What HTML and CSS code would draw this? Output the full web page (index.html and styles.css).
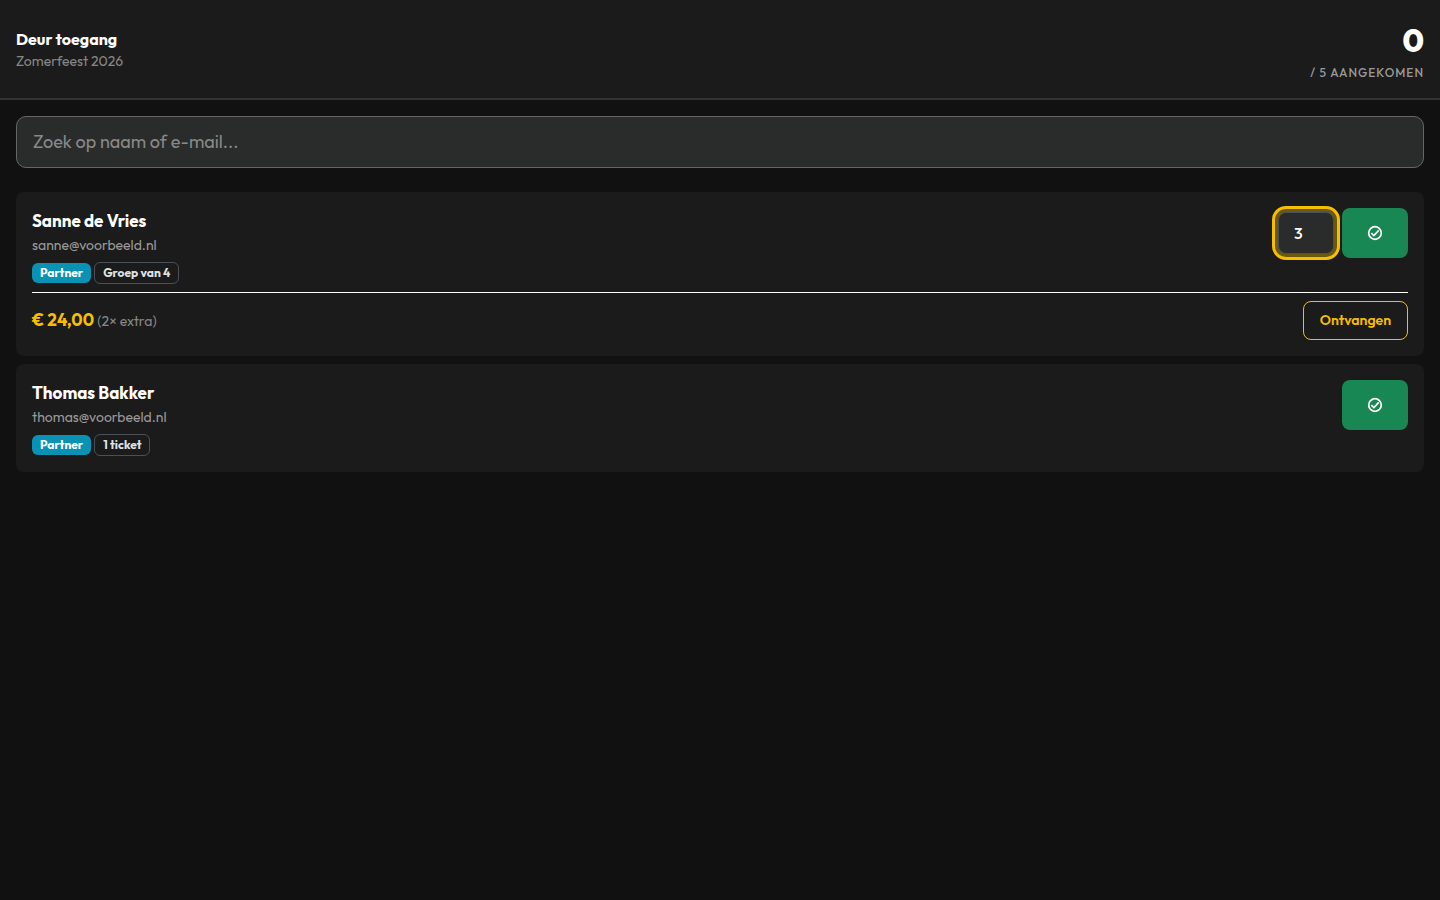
FILE: index.html
```html
<!DOCTYPE html>
<html lang="nl">
<head>
    <meta charset="UTF-8">
    <meta name="viewport" content="width=device-width, initial-scale=1.0">
    <title>Deur toegang</title>
    <link rel="stylesheet" href="styles.css">
</head>
<body>
    <header class="door-header">
        <div>
            <h1>Deur toegang</h1>
            <p class="event-name">Zomerfeest 2026</p>
        </div>
        <div class="counter">
            <div class="counter-number">0</div>
            <div class="counter-label">/ 5 aangekomen</div>
        </div>
    </header>

    <main>
        <input type="text" id="search" class="search" placeholder="Zoek op naam of e-mail..." aria-label="Zoek op naam of e-mail">

        <div class="guest">
            <div class="guest-row">
                <div>
                    <h2>Sanne de Vries</h2>
                    <p class="email">sanne@voorbeeld.nl</p>
                    <div class="badges">
                        <span class="badge badge-partner">Partner</span>
                        <span class="badge badge-outline">Groep van 4</span>
                    </div>
                </div>
                <div class="actions">
                    <input type="text" inputmode="numeric" class="amount" value="3" aria-label="Aantal personen">
                    <button type="button" class="check-in" aria-label="Inchecken">
                        <svg viewBox="0 0 16 16" width="16" height="16" fill="none" stroke="currentColor" stroke-width="1.7">
                            <circle cx="8" cy="8" r="6.3"/>
                            <path d="M4.3 8.1l2.6 2.5 4.8-5.2"/>
                        </svg>
                    </button>
                </div>
            </div>
            <div class="payment">
                <div class="due"><span class="price">€ 24,00</span> <span class="extra">(2× extra)</span></div>
                <button type="button" class="receive">Ontvangen</button>
            </div>
        </div>

        <div class="guest">
            <div class="guest-row">
                <div>
                    <h2>Thomas Bakker</h2>
                    <p class="email">thomas@voorbeeld.nl</p>
                    <div class="badges">
                        <span class="badge badge-partner">Partner</span>
                        <span class="badge badge-outline">1 ticket</span>
                    </div>
                </div>
                <div class="actions">
                    <button type="button" class="check-in" aria-label="Inchecken">
                        <svg viewBox="0 0 16 16" width="16" height="16" fill="none" stroke="currentColor" stroke-width="1.7">
                            <circle cx="8" cy="8" r="6.3"/>
                            <path d="M4.3 8.1l2.6 2.5 4.8-5.2"/>
                        </svg>
                    </button>
                </div>
            </div>
        </div>
    </main>
</body>
</html>
```
FILE: styles.css
```css
* {
    box-sizing: border-box;
}

body {
    margin: 0;
    min-height: 100vh;
    background-color: #111;
    color: #fff;
    font-family: Outfit, Lato, sans-serif;
    font-size: 16px;
}

h1, h2, p {
    margin: 0;
}

input, button {
    font-family: inherit;
}

.door-header {
    display: flex;
    justify-content: space-between;
    align-items: center;
    padding: 16px;
    background-color: #1b1b1b;
    border-bottom: 2px solid #333;
}

h1 {
    font-size: 16px;
    line-height: 24px;
    font-weight: 700;
}

.event-name {
    color: #868686;
    font-size: 14px;
    line-height: 20px;
}

.counter {
    text-align: right;
}

.counter-number {
    font-size: 32px;
    line-height: 48px;
    font-weight: 800;
}

.counter-label {
    color: #999;
    font-size: 12px;
    line-height: 18px;
    font-weight: 500;
    letter-spacing: 1px;
    text-transform: uppercase;
}

main {
    padding: 16px;
}

.search {
    display: block;
    width: 100%;
    height: 52px;
    margin-bottom: 24px;
    padding: 0 16px 2px;
    background-color: #2a2c2b;
    border: 1px solid #666;
    border-radius: 10px;
    color: #fff;
    font-size: 18px;
}

.search::placeholder {
    color: #888;
}

.guest {
    margin-bottom: 8px;
    padding: 16px;
    background-color: #1b1b1b;
    border-radius: 8px;
}

.guest-row {
    display: flex;
    justify-content: space-between;
    align-items: flex-start;
}

h2 {
    font-size: 17px;
    line-height: 26px;
    font-weight: 700;
}

.email {
    color: #999;
    font-size: 14px;
    line-height: 22px;
}

.badges {
    display: flex;
    align-items: center;
    gap: 3px;
    margin-top: 6px;
}

.badge {
    padding: 0 8px;
    border-radius: 6px;
    font-size: 12px;
    line-height: 20px;
    font-weight: 700;
}

.badge-partner {
    background-color: #0992b4;
}

.badge-outline {
    border: 1px solid #495057;
    color: #dee2e6;
}

.actions {
    display: flex;
    align-items: center;
    gap: 8px;
}

.amount {
    width: 56px;
    height: 42px;
    padding: 0 15px;
    background-color: #2a2c2b;
    border: 1px solid #495057;
    border-radius: 8px;
    outline: 3px solid #f5be00;
    outline-offset: 3px;
    box-shadow: 0 0 0 4px #6c590e;
    color: #fff;
    font-size: 16px;
    font-weight: 500;
}

.check-in {
    display: flex;
    justify-content: center;
    align-items: center;
    width: 66px;
    height: 50px;
    padding: 0;
    background-color: #198754;
    border: none;
    border-radius: 8px;
    color: #fff;
    cursor: pointer;
}

.payment {
    display: flex;
    justify-content: space-between;
    align-items: center;
    margin-top: 8px;
    padding-top: 8px;
    border-top: 1px solid #fff;
}

.due {
    line-height: 24px;
}

.price {
    color: #f5be00;
    font-size: 17px;
    font-weight: 700;
}

.extra {
    color: #868686;
    font-size: 14px;
}

.receive {
    height: 39px;
    padding: 0 16px 2px;
    background: none;
    border: 1px solid #f5be00;
    border-radius: 8px;
    color: #f5be00;
    font-size: 14px;
    font-weight: 600;
    cursor: pointer;
}
```
